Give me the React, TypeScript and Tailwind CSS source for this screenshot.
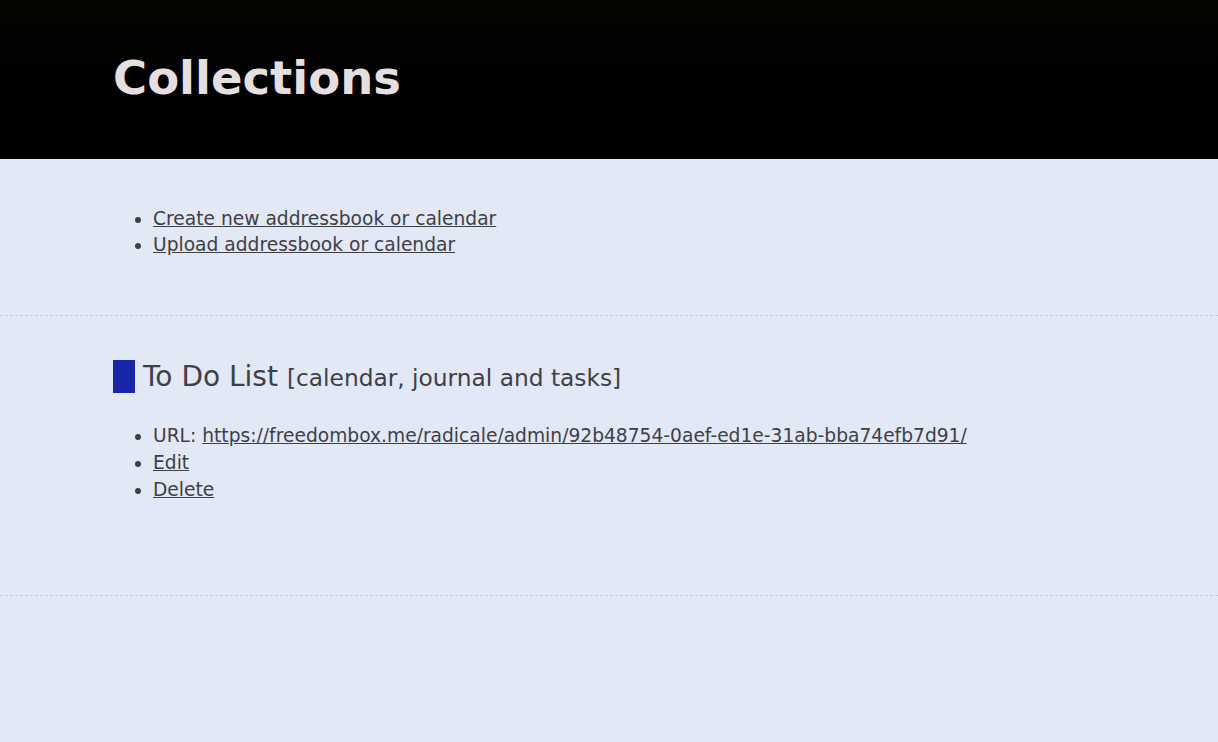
export default function App() {
  const font = { fontFamily: '"DejaVu Sans", sans-serif' };
  return (
    <div className="min-h-[742px] bg-[#e2e8f5] text-[#3f3f46]" style={font}>
      <header className="h-[159px] bg-gradient-to-b from-[#040700] to-[#000000] flex items-center px-[113px]">
        <h1 className="text-[46.5px] font-bold text-[#e6dfe0] leading-none pb-[2px]">Collections</h1>
      </header>
      <section className="border-b border-dashed border-[#c5cde0] px-[113px] pt-[47px] pb-[57px]">
        <ul className="list-disc pl-[40px] text-[18.67px] leading-[26px]">
          <li><a href="#" className="underline">Create new addressbook or calendar</a></li>
          <li><a href="#" className="underline">Upload addressbook or calendar</a></li>
        </ul>
      </section>
      <section className="border-b border-dashed border-[#c5cde0] px-[113px] pt-[44px] pb-[92px]">
        <h2 className="flex items-center leading-none">
          <span className="inline-block w-[22px] h-[33px] bg-[#1827aa] mr-[8px]"></span>
          <span className="text-[28px]">To Do List</span>
          <span className="text-[23.3px] ml-[9px] mt-[2px]">[calendar, journal and tasks]</span>
        </h2>
        <ul className="list-disc pl-[40px] text-[18.67px] leading-[26.8px] mt-[30px]">
          <li>URL: <a href="#" className="underline">https://freedombox.me/radicale/admin/92b48754-0aef-ed1e-31ab-bba74efb7d91/</a></li>
          <li><a href="#" className="underline">Edit</a></li>
          <li><a href="#" className="underline">Delete</a></li>
        </ul>
      </section>
    </div>
  );
}
